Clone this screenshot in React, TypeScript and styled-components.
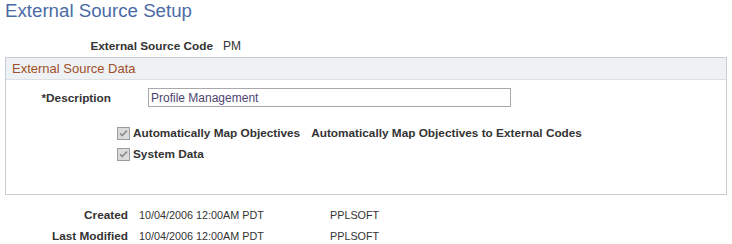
import React from "react";
import styled, { createGlobalStyle } from "styled-components";

const Global = createGlobalStyle`
  html, body { margin: 0; padding: 0; background: #ffffff; }
  body { font-family: "Liberation Sans", Arial, sans-serif; color: #333333; }
`;

const Page = styled.div`
  width: 732px;
  height: 244px;
  box-sizing: border-box;
  padding-left: 5px;
  overflow: hidden;
`;

const Title = styled.h1`
  margin: 0;
  height: 22px;
  line-height: 22px;
  font-size: 18.7px;
  font-weight: normal;
  color: #4a6ba6;
  white-space: nowrap;
`;

const FieldRow = styled.div<{ $label: number; $gap: number; $top: number }>`
  display: grid;
  grid-template-columns: ${(p) => p.$label}px auto;
  column-gap: ${(p) => p.$gap}px;
  align-items: center;
  margin-top: ${(p) => p.$top}px;
  height: 14px;
  font-size: 12px;
  line-height: 14px;
`;

const Label = styled.span`
  font-size: 11.8px;
  font-weight: bold;
  text-align: right;
  white-space: nowrap;
  color: #333333;
`;

const Value = styled.span<{ $size?: number }>`
  font-size: ${(p) => p.$size ?? 12}px;
  white-space: nowrap;
  color: #333333;
`;

const GroupBox = styled.section`
  margin-top: 4px;
  width: 722px;
  height: 138px;
  box-sizing: border-box;
  border: 1px solid #c9cdd1;
`;

const GroupHeader = styled.div`
  height: 22px;
  box-sizing: border-box;
  border-bottom: 1px solid #dde1e4;
  background: #eef2f4;
  padding-left: 6px;
  font-size: 13px;
  line-height: 21px;
  color: #a14f2a;
  white-space: nowrap;
`;

const GroupBody = styled.div`
  padding-top: 8px;
`;

const DescRow = styled.div`
  display: grid;
  grid-template-columns: 105px 363px;
  column-gap: 37px;
  align-items: center;
  height: 19px;
  font-size: 12px;
`;

const TextInput = styled.input`
  box-sizing: border-box;
  width: 363px;
  height: 19px;
  border: 1px solid #a9a9a9;
  padding: 0 2px;
  margin: 0;
  font-family: "Liberation Sans", Arial, sans-serif;
  font-size: 12px;
  color: #4e4470;
  background: #ffffff;
  outline: none;
`;

const CheckRow = styled.div<{ $top: number }>`
  display: flex;
  align-items: center;
  height: 14px;
  margin-top: ${(p) => p.$top}px;
  padding-left: 111px;
  font-size: 11.8px;
  line-height: 14px;
`;

const CheckLabel = styled.span`
  margin-left: 3px;
  font-weight: bold;
  white-space: nowrap;
`;

const CheckDesc = styled.span`
  margin-left: 11px;
  font-weight: bold;
  white-space: nowrap;
`;

const BoxIcon = styled.svg`
  display: block;
  flex: none;
`;

const DisabledCheck = () => (
  <BoxIcon width="13" height="13" viewBox="0 0 13 13">
    <rect x="0.5" y="0.5" width="12" height="12" fill="#dcdcdc" stroke="#9d9d9d" />
    <path d="M3 6.2 L5.2 8.6 L10 3.6" fill="none" stroke="#8d8d8d" strokeWidth="1.7" />
  </BoxIcon>
);

const AuditRow = styled.div<{ $top: number }>`
  display: grid;
  grid-template-columns: 123px 191px auto;
  column-gap: 11px;
  align-items: center;
  margin-top: ${(p) => p.$top}px;
  height: 14px;
  font-size: 12px;
  line-height: 14px;
`;

const AuditValue = styled.span<{ $shift?: number }>`
  font-size: 10.8px;
  white-space: nowrap;
  margin-left: ${(p) => p.$shift ?? 0}px;
`;

export default function App() {
  return (
    <>
      <Global />
      <Page>
        <Title>External Source Setup</Title>
        <FieldRow $label={208} $gap={10} $top={17}>
          <Label>External Source Code</Label>
          <Value>PM</Value>
        </FieldRow>
        <GroupBox>
          <GroupHeader>External Source Data</GroupHeader>
          <GroupBody>
            <DescRow>
              <Label>*Description</Label>
              <TextInput defaultValue="Profile Management" readOnly />
            </DescRow>
            <CheckRow $top={19}>
              <DisabledCheck />
              <CheckLabel>Automatically Map Objectives</CheckLabel>
              <CheckDesc>Automatically Map Objectives to External Codes</CheckDesc>
            </CheckRow>
            <CheckRow $top={7}>
              <DisabledCheck />
              <CheckLabel>System Data</CheckLabel>
            </CheckRow>
          </GroupBody>
        </GroupBox>
        <AuditRow $top={13}>
          <Label>Created</Label>
          <AuditValue>10/04/2006 12:00AM PDT</AuditValue>
          <AuditValue $shift={-11}>PPLSOFT</AuditValue>
        </AuditRow>
        <AuditRow $top={7}>
          <Label>Last Modified</Label>
          <AuditValue>10/04/2006 12:00AM PDT</AuditValue>
          <AuditValue $shift={-11}>PPLSOFT</AuditValue>
        </AuditRow>
      </Page>
    </>
  );
}
